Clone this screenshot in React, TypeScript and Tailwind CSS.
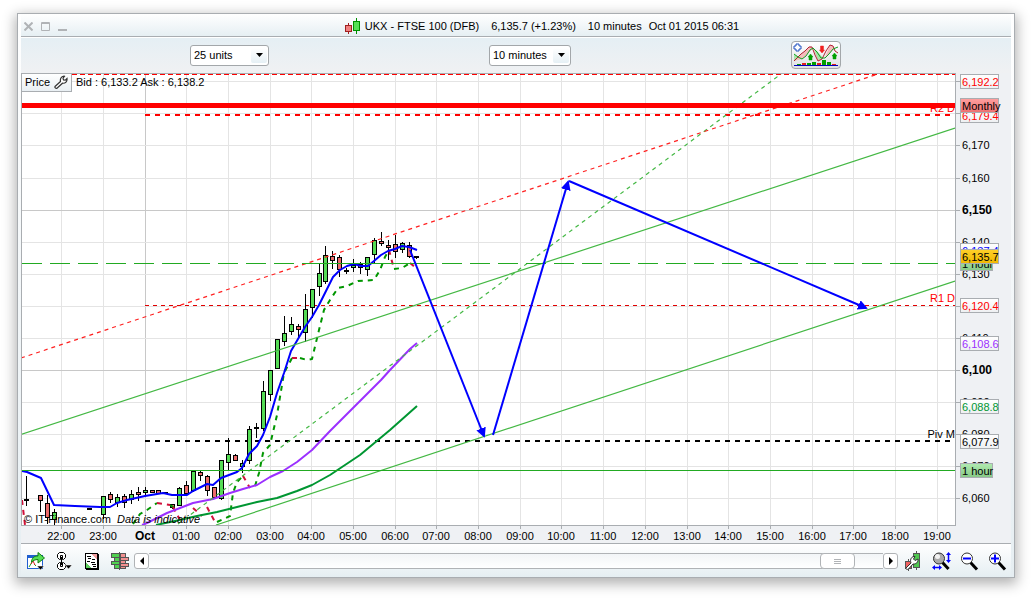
import type { ReactNode } from 'react'

// ─────────────────────────────────────────────────────────────────────────────
// Chart data. Chart units: x runs along the time axis, y down from the top edge.
// ─────────────────────────────────────────────────────────────────────────────

const PLOT = { left: 21, top: 73, right: 955, bottom: 525 }

const TIMES: [number, string][] = [
  [61, '22:00'], [103, '23:00'], [145, 'Oct'], [186, '01:00'], [228, '02:00'],
  [270, '03:00'], [311, '04:00'], [353, '05:00'], [395, '06:00'], [436, '07:00'],
  [478, '08:00'], [520, '09:00'], [561, '10:00'], [603, '11:00'], [645, '12:00'],
  [687, '13:00'], [728, '14:00'], [770, '15:00'], [812, '16:00'], [853, '17:00'],
  [895, '18:00'], [937, '19:00'],
]

const PRICES: [number, string][] = [
  [81, ''], [113, ''], [145, '6,170'], [178, '6,160'], [210, '6,150'],
  [242, '6,140'], [274, '6,130'], [306, ''], [338, '6,110'], [370, '6,100'],
  [402, '6,090'], [434, '6,080'], [466, '6,070'], [498, '6,060'],
]

const MAJOR = ['Oct', '6,150', '6,100']

// x, high, body top, body bottom, low, colour (u = up, d = down, o = doji)
type Candle = [number, number, number, number, number, 'u' | 'd' | 'o']

const CANDLES: Candle[] = [
  [26, 476, 499, 501, 505, 'o'],
  [40, 495, 495, 500, 511, 'd'],
  [47, 495, 503, 517, 523, 'd'],
  [54, 509, 512, 519, 524, 'u'],
  [89, 508, 508, 509, 509, 'o'],
  [103, 496, 496, 514, 518, 'u'],
  [110, 492, 494, 499, 502, 'd'],
  [117, 494, 497, 502, 506, 'u'],
  [124, 494, 496, 502, 507, 'd'],
  [131, 490, 494, 499, 503, 'u'],
  [138, 487, 492, 494, 500, 'd'],
  [145, 487, 490, 492, 495, 'u'],
  [152, 490, 490, 492, 492, 'd'],
  [158, 490, 490, 493, 493, 'd'],
  [165, 492, 492, 493, 493, 'o'],
  [172, 504, 504, 507, 508, 'd'],
  [179, 487, 488, 505, 505, 'u'],
  [186, 481, 485, 493, 495, 'd'],
  [193, 470, 471, 490, 491, 'u'],
  [200, 471, 472, 475, 480, 'd'],
  [207, 475, 476, 490, 495, 'd'],
  [214, 487, 487, 497, 497, 'd'],
  [221, 460, 460, 498, 499, 'u'],
  [228, 438, 454, 462, 470, 'u'],
  [235, 454, 455, 460, 460, 'd'],
  [242, 460, 463, 466, 472, 'u'],
  [249, 426, 429, 460, 463, 'u'],
  [256, 423, 427, 428, 437, 'o'],
  [263, 381, 391, 428, 430, 'u'],
  [270, 370, 370, 394, 400, 'u'],
  [277, 339, 339, 368, 368, 'u'],
  [284, 316, 333, 341, 345, 'u'],
  [291, 317, 324, 331, 334, 'u'],
  [298, 324, 326, 329, 337, 'd'],
  [305, 294, 309, 332, 341, 'u'],
  [312, 289, 289, 307, 317, 'u'],
  [319, 263, 273, 286, 295, 'u'],
  [325, 246, 255, 281, 283, 'u'],
  [332, 251, 256, 260, 268, 'd'],
  [339, 255, 257, 269, 276, 'd'],
  [346, 268, 270, 271, 273, 'o'],
  [353, 259, 265, 267, 271, 'u'],
  [360, 262, 264, 267, 273, 'd'],
  [367, 257, 257, 269, 275, 'u'],
  [374, 238, 240, 254, 263, 'u'],
  [381, 232, 241, 243, 245, 'd'],
  [388, 240, 245, 247, 259, 'd'],
  [395, 235, 244, 251, 257, 'd'],
  [402, 242, 243, 249, 252, 'u'],
  [409, 242, 245, 256, 257, 'd'],
  [416, 256, 256, 257, 258, 'o'],
]

const FAST =
  '22,471 27,472 41,478 54,505 75,506 100,507 110,507 117,503 127,500 145,496 163,493 172,495 187,495 193,491 207,484 213,485 221,478 237,472 242,468 249,454 257,446 263,435 270,417 277,393 284,373 291,351 298,339 305,327 312,317 319,305 326,291 333,277 340,270 347,266 354,264 361,266 368,266 374,261 381,255 388,251 395,249 402,246 409,247 417,250'

const MEDIUM =
  '142,525 147,523 167,513 180,508 193,503 213,499 230,493 243,489 257,485 270,477 283,471 297,462 312,450 330,431 360,401 381,380 390,370 410,349 417,343'

const SLOW =
  '156,525 175,521 197,516 217,512 237,507 257,502 277,498 297,491 312,485 330,475 360,455 390,430 417,406'

const STOP_UP = [
  '133,524 140,514 147,510 157,503',
  '170,505 175,508',
  '217,522 230,516 233,493 237,482 243,476',
  '255,486 259,473 263,453 270,445 277,415 284,373 292,358',
  '300,358 307,360 312,359 319,330 324,310 330,300 338,288 347,286 358,281 374,280 380,270 385,257 389,250',
  '394,269 402,268 410,263',
]

const STOP_DOWN = [
  '22,500 25,525',
  '157,503 170,505',
  '173,507 180,520',
  '193,508 202,516',
  '207,507 215,522',
  '243,476 250,488',
  '292,358 300,358',
  '389,250 394,269',
  '410,263 415,267',
]

// ─────────────────────────────────────────────────────────────────────────────
// Chart pieces
// ─────────────────────────────────────────────────────────────────────────────

function Grid() {
  return (
    <g shapeRendering="crispEdges">
      {TIMES.map(([x, label]) => (
        <line
          key={x}
          x1={x + 0.5}
          x2={x + 0.5}
          y1={PLOT.top}
          y2={PLOT.bottom}
          stroke={MAJOR.includes(label) ? '#c8c8c8' : '#e4e4e4'}
        />
      ))}
      {PRICES.map(([y, label]) => (
        <line
          key={y}
          x1={PLOT.left}
          x2={PLOT.right}
          y1={y + 0.5}
          y2={y + 0.5}
          stroke={MAJOR.includes(label) ? '#c8c8c8' : '#e4e4e4'}
        />
      ))}
    </g>
  )
}

function Axes() {
  return (
    <g>
      <g shapeRendering="crispEdges" stroke="#a9adb1" fill="none">
        <rect x={21.5} y={73.5} width={934} height={452} />
        {TIMES.map(([x]) => (
          <line key={x} x1={x + 0.5} x2={x + 0.5} y1={526} y2={529} />
        ))}
        {PRICES.map(([y]) => (
          <line key={y} x1={956} x2={960} y1={y + 0.5} y2={y + 0.5} />
        ))}
      </g>
      {TIMES.map(([x, label]) => (
        <text
          key={x}
          x={x}
          y={540}
          textAnchor="middle"
          className={MAJOR.includes(label) ? 'text-[12px] font-bold' : 'text-[11px]'}
        >
          {label}
        </text>
      ))}
      {PRICES.map(([y, label]) => (
        <text
          key={y}
          x={962}
          y={y + 4}
          className={MAJOR.includes(label) ? 'text-[12px] font-bold' : 'text-[11px]'}
        >
          {label}
        </text>
      ))}
    </g>
  )
}

function CandleMark({ candle }: { candle: Candle }) {
  const [x, high, top, bottom, low, kind] = candle
  return (
    <g stroke="#000">
      <line x1={x + 0.5} x2={x + 0.5} y1={high} y2={low + 1} />
      {kind === 'o' ? (
        <rect x={x - 2} y={top} width={5} height={2} fill="#000" stroke="none" />
      ) : (
        <rect
          x={x - 1.5}
          y={top + 0.5}
          width={4}
          height={bottom - top}
          fill={kind === 'u' ? '#55dc55' : '#ea6a6a'}
        />
      )}
    </g>
  )
}

function Tag({
  y,
  label,
  color = '#000',
  fill = 'url(#tagPlain)',
  width = 38,
}: {
  y: number
  label: string
  color?: string
  fill?: string
  width?: number
}) {
  return (
    <g>
      <rect x={960.5} y={y + 0.5} width={width} height={14} fill={fill} stroke="#a9adb1" />
      <text x={962} y={y + 12} fill={color} className="text-[11px]">
        {label}
      </text>
    </g>
  )
}

function Chart() {
  return (
    <div className="relative">
      <svg viewBox="21 73 990 470" className="block h-auto w-full" role="img" aria-label="UKX price chart">
        <defs>
          <linearGradient id="tagPlain" x1="0" y1="0" x2="0" y2="1">
            <stop offset="0" stopColor="#ffffff" />
            <stop offset="1" stopColor="#eef0f2" />
          </linearGradient>
          <linearGradient id="tagRed" x1="0" y1="0" x2="0" y2="1">
            <stop offset="0" stopColor="#ffa0a0" />
            <stop offset="1" stopColor="#ee7070" />
          </linearGradient>
          <linearGradient id="tagGreen" x1="0" y1="0" x2="0" y2="1">
            <stop offset="0" stopColor="#b0ebb0" />
            <stop offset="1" stopColor="#86c886" />
          </linearGradient>
          <linearGradient id="tagGold" x1="0" y1="0" x2="0" y2="1">
            <stop offset="0" stopColor="#ffd02a" />
            <stop offset="1" stopColor="#f0b800" />
          </linearGradient>
          <marker
            id="arrow"
            markerUnits="userSpaceOnUse"
            markerWidth="12"
            markerHeight="12"
            refX="8"
            refY="5"
            orient="auto"
          >
            <path d="M0 0 L10 5 L0 10 Z" fill="#0000ff" />
          </marker>
          <clipPath id="plot">
            <rect x={22} y={74} width={933} height={451} />
          </clipPath>
        </defs>

        <rect x={21} y={73} width={935} height={453} fill="#fff" />
        <Grid />

        <g clipPath="url(#plot)" fill="none">
          {/* pivots */}
          <g shapeRendering="crispEdges">
            <line x1={72} x2={955} y1={74.5} y2={74.5} stroke="#f00" strokeDasharray="5 3" />
            <line x1={145} x2={955} y1={115} y2={115} stroke="#f00" strokeWidth={2} strokeDasharray="5 5" />
            <line x1={145} x2={955} y1={305.5} y2={305.5} stroke="#e00000" strokeDasharray="4 4" />
            <line x1={145} x2={955} y1={441} y2={441} stroke="#000" strokeWidth={2} strokeDasharray="5 5" />
          </g>
          <text x={955} y={112} textAnchor="end" fill="#f00" className="text-[11px]">R2 D</text>
          <text x={955} y={302} textAnchor="end" fill="#f00" className="text-[11px]">R1 D</text>
          <text x={955} y={438} textAnchor="end" fill="#000" className="text-[11px]">Piv M</text>

          <g shapeRendering="crispEdges">
            {CANDLES.map((candle) => (
              <CandleMark key={candle[0]} candle={candle} />
            ))}
          </g>

          {/* stop and averages */}
          <g strokeWidth={2} strokeDasharray="5 5">
            {STOP_UP.map((points) => (
              <polyline key={points} points={points} stroke="#009600" />
            ))}
            {STOP_DOWN.map((points) => (
              <polyline key={points} points={points} stroke="#d0103a" />
            ))}
          </g>
          <g strokeWidth={2} strokeLinejoin="round">
            <polyline points={SLOW} stroke="#009632" />
            <polyline points={MEDIUM} stroke="#9b30ff" />
            <polyline points={FAST} stroke="#0000ff" />
          </g>

          {/* trend lines */}
          <g stroke="#44b844" strokeWidth="1.2">
            <line x1={21} y1={434.5} x2={955} y2={128} />
            <line x1={216} y1={525} x2={955} y2={281} />
            <line x1={178} y1={524} x2={781} y2={74} strokeDasharray="4 4" />
          </g>
          <line x1={21} y1={358} x2={878} y2={74} stroke="#ff2020" strokeWidth="1.2" strokeDasharray="4 4" />
          <g stroke="#22aa22" shapeRendering="crispEdges">
            <line x1={22} x2={955} y1={470.5} y2={470.5} />
            <line x1={22} x2={955} y1={263.5} y2={263.5} strokeDasharray="20 8" />
            <line x1={302} x2={434} y1={263.5} y2={263.5} />
          </g>
          <rect x={22} y={103} width={933} height={5} fill="#f00" />

          {/* projected path */}
          <g stroke="#0000ff" strokeWidth={2}>
            <line x1={410} y1={250} x2={484} y2={436} markerEnd="url(#arrow)" />
            <line x1={493} y1={435} x2={568} y2={182} markerEnd="url(#arrow)" />
            <line x1={569} y1={181} x2={866} y2={308} markerEnd="url(#arrow)" />
          </g>
        </g>

        <text x={24} y={523} className="text-[11px]">© IT-Finance.com</text>
        <text x={117} y={523} className="text-[11px] italic">Data is indicative</text>

        <Axes />

        <Tag y={74} label="6,192.2" color="#f00" />
        <Tag y={108} label="6,179.4" color="#f00" />
        <Tag y={98} label="Monthly" fill="url(#tagRed)" />
        <Tag y={243} label="6,137.4" color="#0000ff" />
        <Tag y={256} label="1 hour" fill="url(#tagGreen)" width={32} />
        <Tag y={249} label="6,135.7" fill="url(#tagGold)" />
        <Tag y={298} label="6,120.4" color="#f00" />
        <Tag y={336} label="6,108.6" color="#9b30ff" />
        <Tag y={399} label="6,088.8" color="#009632" />
        <Tag y={434} label="6,077.9" />
        <Tag y={463} label="1 hour" fill="url(#tagGreen)" width={32} />
      </svg>

      <div className="absolute top-0 left-0 flex items-center gap-1">
        <button
          type="button"
          className="flex h-[19px] w-[51px] items-center justify-between border border-[#a9adb1] bg-linear-to-b from-white to-[#e9eff3] px-[3px] pb-px"
        >
          Price
          <svg viewBox="0 0 14 14" className="size-3.5" fill="#fff" stroke="#333" strokeWidth="1.2" aria-hidden="true">
            <path d="M1 11.5 L6.5 6.5 C6 4 7 1.5 10 1 L10.5 1.2 L9 3.2 L9.5 5 L11.3 5.2 L13 3.5 C13.4 6.5 11.5 8.5 8.5 8.2 L3 13.3 C1.5 13.5 .6 12.6 1 11.5 Z" />
          </svg>
        </button>
        <span className="pb-px">Bid : 6,133.2 Ask : 6,138.2</span>
      </div>
    </div>
  )
}

// ─────────────────────────────────────────────────────────────────────────────
// Window chrome
// ─────────────────────────────────────────────────────────────────────────────

function TitleBar() {
  return (
    <header className="relative flex h-[23px] items-center justify-center border-b border-[#a9adb1] bg-linear-to-b from-white to-[#e6eff3] pt-px pl-[52px]">
      <div className="absolute top-2 left-[3px] flex gap-2 text-[#b0b3b6]">
        <button type="button" aria-label="Close">
          <svg viewBox="0 0 9 9" className="size-[9px]" stroke="currentColor" strokeWidth="2">
            <path d="M.5 .5 L8.5 8.5 M8.5 .5 L.5 8.5" />
          </svg>
        </button>
        <button type="button" aria-label="Maximise">
          <svg viewBox="0 0 9 9" className="size-[9px]" fill="none" stroke="currentColor">
            <path d="M.5 .5 H8.5 V8.5 H.5 Z M0 1.5 H9" />
          </svg>
        </button>
        <button type="button" aria-label="Minimise">
          <svg viewBox="0 0 9 9" className="size-[9px]" fill="currentColor">
            <rect y="7" width="9" height="2" />
          </svg>
        </button>
      </div>
      <h1 className="flex items-center">
        <svg viewBox="0 0 16 16" className="mr-1 size-4" shapeRendering="crispEdges" aria-hidden="true">
          <path d="M3.5 5 V16" stroke="#a02020" />
          <rect x=".5" y="7.5" width="6" height="6" fill="#f08080" stroke="#a02020" />
          <path d="M11.5 0 V16" stroke="#009000" />
          <rect x="8.5" y="3.5" width="6" height="9" fill="#55e055" stroke="#009000" />
        </svg>
        <span className="mr-3">UKX - FTSE 100 (DFB)</span>
        <span className="mr-3">6,135.7 (+1.23%)</span>
        <span className="mr-[7px]">10 minutes</span>
        <span>Oct 01 2015 06:31</span>
      </h1>
    </header>
  )
}

function Select({ label, value, className }: { label: string; value: string; className: string }) {
  return (
    <div className={`relative h-[21px] ${className}`}>
      <select
        aria-label={label}
        className="block size-full appearance-none rounded-[3px] border border-[#a3a7aa] bg-white pl-[3px] leading-4"
      >
        <option>{value}</option>
      </select>
      <span className="pointer-events-none absolute inset-y-[3px] right-[2px] grid w-4 place-items-center rounded-xs bg-linear-to-b from-white to-[#e6f0f5]">
        <svg viewBox="0 0 7 4" className="h-1 w-[7px]" aria-hidden="true">
          <path d="M0 0 H7 L3.5 4 Z" />
        </svg>
      </span>
    </div>
  )
}

function Toolbar() {
  return (
    <div className="flex items-center justify-center gap-[220px] border-t border-white bg-linear-to-b from-[#e5eff4] to-[#f0f1f3] pt-[3px] pr-px pb-1">
      <Select label="Number of units" value="25 units" className="w-[79px]" />
      <Select label="Time frame" value="10 minutes" className="w-[82px]" />
      <button
        type="button"
        aria-label="Add indicator"
        className="grid h-7 w-[50px] place-items-center rounded-[4px] border border-[#a3a7aa] bg-linear-to-b from-white to-[#dfe1e3]"
      >
        <svg viewBox="0 0 46 24" className="h-6 w-[46px]" fill="none">
          <path d="M1 18 L17 3 L20 5 L13 13 L9 16Z M20 5 L25 18 L30 15 L24 9Z M32 14 L37 2 L41 4 L40 7 L36 11Z" fill="#f4bcbc" />
          <path d="M1 11 L5 14 L3 17 L1 18Z M21 6 L25 17 L30 15 L24 8Z" fill="#a8e6a8" />
          <path d="M1 18 L5 14 L8 11 L12 8 L16 4 L19 4 L22 12 L25 18 L29 16 L33 8 L37 2 L40 3 L42 8 L45 10" stroke="#b02030" />
          <path d="M1 11 L5 14 L9 16 L13 13 L17 7 L20 5 L24 9 L28 15 L32 15 L36 11 L40 6 L45 4" stroke="#10a020" />
          <path d="M3 1 H6 V3 H8 V6 H6 V8 H3 V6 H1 V3 H3Z" fill="#fff" stroke="#2050c0" />
          <path d="M17.500 11 L20 14 H19 V17 H16 V14 H15Z M41.500 10 L44 13 H43 V16 H40 V13 H39Z" fill="#00a000" stroke="#00a000" strokeWidth=".5" />
          <path d="M29 10 L31.500 7 H30.500 V3 H27.500 V7 H26.500Z" fill="#f02020" stroke="#f02020" strokeWidth=".5" />
          <path d="M4 21 H8 V22 H4Z M14 20 H18 V22 H14Z M19 19 H23 V22 H19Z M29 17 H33 V22 H29Z M34 19 H38 V22 H34Z" fill="#00a000" />
          <path d="M9 20 H13 V22 H9Z M24 20 H28 V22 H24Z M39 21 H43 V22 H39Z" fill="#e02020" />
          <path d="M1 22.500 H45" stroke="#0000c0" />
        </svg>
      </button>
    </div>
  )
}

function IconButton({ label, children }: { label: string; children: ReactNode }) {
  return (
    <button type="button" aria-label={label} className="size-5 shrink-0">
      <svg viewBox="0 0 20 20" className="size-5" fill="none">
        {children}
      </svg>
    </button>
  )
}

function FooterBar() {
  return (
    <footer className="flex items-center border-t border-[#a9adb1] bg-linear-to-b from-white to-[#e5eef2] pt-[7px] pr-1 pb-[6px] pl-[5px]">
      <div className="mr-1 flex gap-2">
        <IconButton label="Export">
          <rect x="1.500" y="4.500" width="15" height="13" fill="#fff" stroke="#2060d0" />
          <path d="M1 4 H12 V7 H1Z" fill="#2060d0" />
          <path d="M3 16 L5.500 12 M8 13 L10 15" stroke="#20a020" />
          <path d="M5 13 L7 10 L9 14" stroke="#e02020" />
          <path d="M5.500 11.500 C5.500 7 8 5 12 5 V1.500 L18.500 7 L12 12 V8.500 C9 8.500 7 9.500 5.500 11.500Z" fill="#55dd55" stroke="#108010" />
          <path d="M11 15 H18 L14.500 19Z" fill="#000" stroke="#fff" strokeWidth=".5" />
        </IconButton>
        <IconButton label="Link windows">
          <path d="M6.500 8.500 H5.500 L3.500 6.500 V3.500 L5.500 1.500 H9.500 L11.500 3.500 V6.500 L9.500 8.500 H8.500 V4.500 H6.500 Z" fill="#fff" stroke="#000" />
          <path d="M6.500 11.500 H5.500 L3.500 13.500 V16.500 L5.500 18.500 H9.500 L11.500 16.500 V13.500 L9.500 11.500 H8.500 V15.500 H6.500 Z" fill="#fff" stroke="#000" />
          <path d="M7.500 6 V14" stroke="#000" />
          <path d="M11 14 H18 L14.500 18Z" fill="#000" stroke="#fff" strokeWidth=".5" />
        </IconButton>
        <IconButton label="Orders list">
          <g shapeRendering="crispEdges">
            <rect x="3.500" y="2.500" width="12" height="15" fill="#fff" stroke="#000" />
            <path d="M16.500 3 V19 M4 18.500 H17" stroke="#000" />
            <path d="M9 3 H15 V8 Z" fill="#f0a0a0" />
            <path d="M4 12 L10 17 H4Z" fill="#60d060" />
            <path d="M5 5.500 H9 M6 7.500 H9 M10 8.500 H13 M5 10.500 H8 M9 11.500 H13 M10 13.500 H14 M11 15.500 H14" stroke="#000" />
          </g>
        </IconButton>
        <IconButton label="Market depth">
          <g shapeRendering="crispEdges">
            <path d="M1.500 2.500 H10 V6.500 H1.500Z M4.500 6.500 H10 V10.500 H4.500Z M1.500 10.500 H10 V13.500 H1.500Z M4.500 13.500 H10 V17.500 H4.500Z" fill="#50d050" stroke="#555" />
            <path d="M10 2.500 H15.500 V6.500 H10Z M10 6.500 H18.500 V9.500 H10Z M10 9.500 H15.500 V12.500 H10Z M10 12.500 H18.500 V15.500 H10Z M10 15.500 H15.500 V17.500 H10Z" fill="#f09090" stroke="#555" />
            <path d="M9.500 1 V19" stroke="#555" />
          </g>
        </IconButton>
      </div>

      <div className="flex h-4 min-w-0 flex-1">
        <button
          type="button"
          aria-label="Scroll back"
          className="grid w-[15px] place-items-center rounded-[3px] border border-[#b0b3b6] bg-white"
        >
          <svg viewBox="0 0 4 8" className="h-2 w-1">
            <path d="M4 0 V8 L0 4Z" />
          </svg>
        </button>
        <input
          type="range"
          aria-label="Chart position"
          defaultValue={96}
          className="h-4 min-w-0 flex-1 appearance-none border-y border-[#b0b3b6] bg-linear-to-b from-[#f2f5f7] to-white [&::-webkit-slider-thumb]:h-4 [&::-webkit-slider-thumb]:w-[35px] [&::-webkit-slider-thumb]:appearance-none [&::-webkit-slider-thumb]:rounded-[4px] [&::-webkit-slider-thumb]:border [&::-webkit-slider-thumb]:border-[#b0b3b6] [&::-webkit-slider-thumb]:bg-white [&::-webkit-slider-thumb]:bg-[repeating-linear-gradient(to_bottom,#b0b3b6_0_1px,transparent_1px_2px)] [&::-webkit-slider-thumb]:bg-[size:7px_5px] [&::-webkit-slider-thumb]:bg-center [&::-webkit-slider-thumb]:bg-no-repeat"
        />
        <button
          type="button"
          aria-label="Scroll forward"
          className="grid w-[15px] place-items-center rounded-[3px] border border-[#b0b3b6] bg-white"
        >
          <svg viewBox="0 0 4 8" className="h-2 w-1">
            <path d="M0 0 V8 L4 4Z" />
          </svg>
        </button>
      </div>

      <div className="ml-[5px] flex gap-2">
        <IconButton label="Chart settings">
          <g shapeRendering="crispEdges">
            <path d="M5.500 8 V20 M13.500 0 V19" stroke="#555" />
            <rect x="2.500" y="10.500" width="6" height="7" fill="#f06060" stroke="#555" />
            <rect x="10.500" y="2.500" width="6" height="14" fill="#50c850" stroke="#555" />
          </g>
          <path d="M3 17 L8 12 C6.500 8 9 5 12 5.500 L10.500 8 L12 9.500 L15 8 C15.500 11 13 13.500 10 13 L5.500 18 C4 19 2.500 18 3 17Z" fill="#fff" stroke="#333" />
        </IconButton>
        <IconButton label="Fit zoom">
          <path d="M11.500 11.500 L17.500 18" stroke="#000" strokeWidth="3" />
          <circle cx="8" cy="7.500" r="5.500" fill="#aaa" stroke="#333" />
          <circle cx="6.500" cy="5.500" r="2.500" fill="#f2f2f2" />
          <path d="M17.500 3 V10 M3 16.500 H9" stroke="#0000ff" strokeWidth="1.500" />
          <path d="M17.500 1 L20 4 H15Z M17.500 12 L20 9 H15Z M1 16.500 L4 14 V19Z M11 16.500 L8 14 V19Z" fill="#0000ff" />
        </IconButton>
        <IconButton label="Zoom out">
          <path d="M11.500 11.500 L18 18.500" stroke="#000" strokeWidth="3" />
          <circle cx="8" cy="7.500" r="5.500" fill="#fff" stroke="#333" />
          <path d="M4 7.500 H12" stroke="#0000ff" strokeWidth="2" />
        </IconButton>
        <IconButton label="Zoom in">
          <path d="M11.500 11.500 L18 18.500" stroke="#000" strokeWidth="3" />
          <circle cx="8" cy="7.500" r="5.500" fill="#fff" stroke="#333" />
          <path d="M4 7.500 H12 M8 3.500 V11.500" stroke="#0000ff" strokeWidth="2" />
        </IconButton>
      </div>
    </footer>
  )
}

export default function App() {
  return (
    <main className="bg-white px-[17px] pt-[13px] pb-5 font-['Liberation_Sans',Arial,sans-serif] text-[11px] leading-4 text-black">
      <section className="border border-[#a9adb1] bg-linear-to-b from-white to-[#e6eef2] px-[3px] shadow-[0_4px_12px_2px_rgba(0,0,0,0.3)]">
        <TitleBar />
        <Toolbar />
        <div className="bg-[#eff1f4]">
          <Chart />
        </div>
        <FooterBar />
      </section>
    </main>
  )
}
